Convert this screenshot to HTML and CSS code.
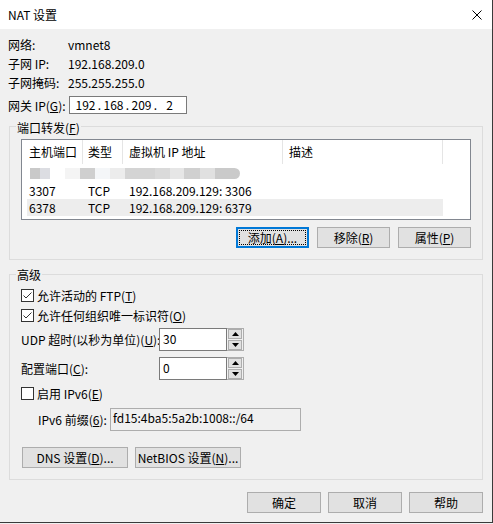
FILE: index.html
```html
<!DOCTYPE html>
<html lang="zh-CN">
<head>
<meta charset="utf-8">
<title>NAT 设置</title>
<link rel="stylesheet" href="styles.css">
</head>
<body>
<div class="window">
  <div class="titlebar">
    <span class="title">NAT 设置</span>
    <svg class="close" width="10" height="10" viewBox="0 0 10 10"><path d="M0.5 0.5L9.5 9.5M9.5 0.5L0.5 9.5" stroke="#000" stroke-width="1" fill="none"/></svg>
  </div>
  <div class="content">
    <div class="info">
      <div class="info-row"><span class="info-label">网络:</span><span>vmnet8</span></div>
      <div class="info-row"><span class="info-label">子网 IP:</span><span>192.168.209.0</span></div>
      <div class="info-row"><span class="info-label">子网掩码:</span><span>255.255.255.0</span></div>
    </div>
    <div class="gw-row">
      <span class="gw-label">网关 IP(<u>G</u>):</span>
      <div class="ip-box">
        <span class="oct">192</span><span class="dot">.</span><span class="oct">168</span><span class="dot">.</span><span class="oct">209</span><span class="dot">.</span><span class="oct">2</span>
      </div>
    </div>

    <div class="group g1">
      <div class="g-title t1">端口转发(<u>F</u>)</div>
      <div class="list">
        <div class="list-head">
          <div class="h h1">主机端口</div>
          <div class="h h2">类型</div>
          <div class="h h3">虚拟机 IP 地址</div>
          <div class="h h4">描述</div>
        </div>
        <div class="row blur-row">
          <span class="bl" style="width:10px;background:#c9c9c9"></span>
          <span class="bl" style="width:10px;background:#dcdde2"></span>
          <span class="bl" style="width:15px;background:#ffffff"></span>
          <span class="bl" style="width:15px;background:#f4f4f4"></span>
          <span class="bl" style="width:15px;background:#cfcfcf"></span>
          <span class="bl" style="width:15px;background:#f4f6f8"></span>
          <span class="bl" style="width:15px;background:#ececec"></span>
          <span class="bl" style="width:30px;background:#d4d4d4"></span>
          <span class="bl" style="width:15px;background:#dadada"></span>
          <span class="bl" style="width:14px;background:#e6e6e6"></span>
          <span class="bl" style="width:16px;background:#d0d0d0"></span>
          <span class="bl" style="width:15px;background:#e0e0e0"></span>
          <span class="bl end" style="width:25px;background:#cacaca"></span>
        </div>
        <div class="row">
          <span class="c c1">3307</span><span class="c c2">TCP</span><span class="c c3">192.168.209.129: 3306</span>
        </div>
        <div class="row hl">
          <span class="c c1">6378</span><span class="c c2">TCP</span><span class="c c3">192.168.209.129: 6379</span>
        </div>
      </div>
      <div class="btn-row">
        <div class="btn focus"><span class="focus-in">添加(<u>A</u>)...</span></div>
        <div class="btn">移除(<u>R</u>)</div>
        <div class="btn">属性(<u>P</u>)</div>
      </div>
    </div>

    <div class="group g2">
      <div class="g-title t2">高级</div>
      <div class="cb-row first">
        <span class="cb"><svg width="11" height="11" viewBox="0 0 11 11"><path d="M1.5 5.5L4 8L9.5 2.5" stroke="#333" stroke-width="1" fill="none"/></svg></span>
        <span>允许活动的 FTP(<u>T</u>)</span>
      </div>
      <div class="cb-row">
        <span class="cb"><svg width="11" height="11" viewBox="0 0 11 11"><path d="M1.5 5.5L4 8L9.5 2.5" stroke="#333" stroke-width="1" fill="none"/></svg></span>
        <span>允许任何组织唯一标识符(<u>O</u>)</span>
      </div>
      <div class="spin-row udp">
        <span class="spin-label">UDP 超时(以秒为单位)(<u>U</u>):</span>
        <div class="spin">
          <div class="spin-text">30</div>
          <div class="spin-btns">
            <div class="sb"><svg width="7" height="4" viewBox="0 0 7 4"><path d="M3.5 0L7 4H0Z" fill="#000"/></svg></div>
            <div class="sb"><svg width="7" height="4" viewBox="0 0 7 4"><path d="M0 0H7L3.5 4Z" fill="#000"/></svg></div>
          </div>
        </div>
      </div>
      <div class="spin-row port">
        <span class="spin-label">配置端口(<u>C</u>):</span>
        <div class="spin">
          <div class="spin-text">0</div>
          <div class="spin-btns">
            <div class="sb"><svg width="7" height="4" viewBox="0 0 7 4"><path d="M3.5 0L7 4H0Z" fill="#000"/></svg></div>
            <div class="sb"><svg width="7" height="4" viewBox="0 0 7 4"><path d="M0 0H7L3.5 4Z" fill="#000"/></svg></div>
          </div>
        </div>
      </div>
      <div class="cb-row ipv6">
        <span class="cb"></span>
        <span>启用 IPv6(<u>E</u>)</span>
      </div>
      <div class="prefix-row">
        <span class="prefix-label">IPv6 前缀(<u>6</u>):</span>
        <div class="prefix-box">fd15:4ba5:5a2b:1008::/64</div>
      </div>
      <div class="dns-row">
        <div class="btn wide">DNS 设置(<u>D</u>)...</div>
        <div class="btn wide">NetBIOS 设置(<u>N</u>)...</div>
      </div>
    </div>

    <div class="bottom-row">
      <div class="btn bb">确定</div>
      <div class="btn bb">取消</div>
      <div class="btn bb">帮助</div>
    </div>
  </div>
</div>
</body>
</html>
```

FILE: styles.css
```css
html, body {
  margin: 0;
  padding: 0;
  background: #f0f0f0;
}
body {
  font-family: "Noto Sans CJK SC", "Noto Sans", sans-serif;
  font-size: 12px;
  color: #000;
}
u { text-decoration: underline; text-underline-offset: 1px; }

.window {
  width: 493px;
  height: 523px;
  box-sizing: border-box;
  border-right: 1px solid #3a3a3a;
  border-bottom: 1px solid #3a3a3a;
  background: #f0f0f0;
}
.titlebar {
  height: 29px;
  background: #fff;
  display: flex;
  align-items: center;
  justify-content: space-between;
  padding: 0 10px 0 8px;
}
.title { line-height: 16px; }
.close { display: block; }

.content {
  padding: 0 9px;
}
.info {
  padding-top: 6px;
  margin-left: -1px;
}
.info-row {
  display: flex;
  height: 19px;
  line-height: 19px;
}
.info-label { width: 60px; }

.gw-row {
  margin-top: 4px;
  margin-left: -1px;
  display: flex;
  align-items: center;
  height: 18px;
}
.gw-label { width: 61px; }
.ip-box {
  width: 118px;
  height: 18px;
  box-sizing: border-box;
  border: 1px solid #7a7a7a;
  background: #fff;
  display: flex;
  padding-left: 4px;
  line-height: 16px;
}
.oct { width: 23px; text-align: center; }
.dot { width: 5px; text-align: center; }

.group {
  border: 1px solid #dcdcdc;
}
.g1 { margin-top: 12px; padding-bottom: 11px; }
.g2 { margin-top: 14px; padding-bottom: 11px; }
.g-title {
  display: table;
  margin-left: 6px;
  padding: 0 1px;
  background: #f0f0f0;
  line-height: 16px;
}
.t1 { margin-top: -7px; }
.t2 { margin-top: -8px; }

.list {
  margin: 3px 11px 0 11px;
  height: 81px;
  box-sizing: border-box;
  border: 1px solid #828790;
  background: #fff;
}
.list-head {
  display: flex;
  height: 25px;
  line-height: 24px;
}
.h {
  box-sizing: border-box;
  border-right: 1px solid #e5e5e5;
  padding-left: 6px;
  height: 24px;
}
.h1 { width: 61px; padding-left: 7px; }
.h2 { width: 40px; padding-left: 5px; }
.h3 { width: 160px; }
.h4 { width: 160px; }

.row {
  display: flex;
  margin-left: 5px;
  width: 416px;
  height: 17px;
  line-height: 17px;
}
.row.hl { background: #ededed; }
.c { box-sizing: border-box; white-space: nowrap; }
.c1 { width: 56px; padding-left: 2px; }
.c2 { width: 40px; padding-left: 5px; }
.c3 { width: 160px; padding-left: 6px; }

.blur-row {
  align-items: center;
  padding-left: 3px;
  box-sizing: border-box;
}
.bl {
  display: block;
  height: 11px;
  filter: blur(0.6px);
}
.bl.end { border-radius: 0 6px 6px 0; }

.btn {
  box-sizing: border-box;
  height: 21px;
  border: 1px solid #adadad;
  background: #e1e1e1;
  display: flex;
  align-items: center;
  justify-content: center;
  white-space: nowrap;
  line-height: 16px;
}
.btn-row {
  margin: 7px 11px 0 0;
  display: flex;
  justify-content: flex-end;
  gap: 8px;
}
.btn-row .btn { width: 73px; }
.btn.focus {
  border: 1px solid #0078d7;
  box-shadow: inset 0 0 0 1px #0078d7;
  padding: 2px;
  align-items: stretch;
}
.focus-in {
  flex: 1;
  border: 1px dotted #000;
  display: flex;
  align-items: center;
  justify-content: center;
}

.cb-row {
  display: flex;
  align-items: center;
  height: 20px;
  margin-left: 11px;
}
.cb-row.first { margin-top: 2px; }
.cb-row.ipv6 { margin-top: 3px; }
.cb {
  width: 13px;
  height: 13px;
  box-sizing: border-box;
  border: 1px solid #333;
  background: #fff;
  margin-right: 3px;
  display: flex;
  align-items: center;
  justify-content: center;
}
.cb svg { display: block; }

.spin-row {
  display: flex;
  align-items: center;
  margin-left: 11px;
  height: 23px;
}
.spin-row.udp { margin-top: 3px; }
.spin-row.port { margin-top: 6px; }
.spin-label { width: 138px; white-space: nowrap; }
.spin {
  display: flex;
  height: 23px;
  width: 85px;
}
.spin-text {
  width: 68px;
  height: 23px;
  box-sizing: border-box;
  border: 1px solid #7a7a7a;
  background: #fff;
  padding: 1px 0 0 3px;
  line-height: 17px;
}
.spin-btns {
  width: 17px;
  height: 23px;
  box-sizing: border-box;
  border: 1px solid #adadad;
  border-left: none;
  background: #f0f0f0;
  display: flex;
  flex-direction: column;
  padding: 0 1px;
  gap: 1px;
  justify-content: center;
}
.sb {
  flex: 1;
  box-sizing: border-box;
  border: 1px solid #adadad;
  background: #e1e1e1;
  display: flex;
  align-items: center;
  justify-content: center;
}
.sb svg { display: block; }

.prefix-row {
  display: flex;
  align-items: center;
  margin: 5px 0 0 28px;
  height: 23px;
}
.prefix-label { width: 72px; white-space: nowrap; }
.prefix-box {
  width: 191px;
  height: 23px;
  box-sizing: border-box;
  border: 1px solid #adadad;
  background: #f0f0f0;
  padding: 0 0 0 2px;
  line-height: 18px;
}

.dns-row {
  display: flex;
  gap: 7px;
  margin: 16px 0 0 12px;
}
.btn.wide { width: 106px; }

.bottom-row {
  margin-top: 12px;
  display: flex;
  justify-content: flex-end;
  gap: 7px;
}
.btn.bb { width: 74px; }
```
